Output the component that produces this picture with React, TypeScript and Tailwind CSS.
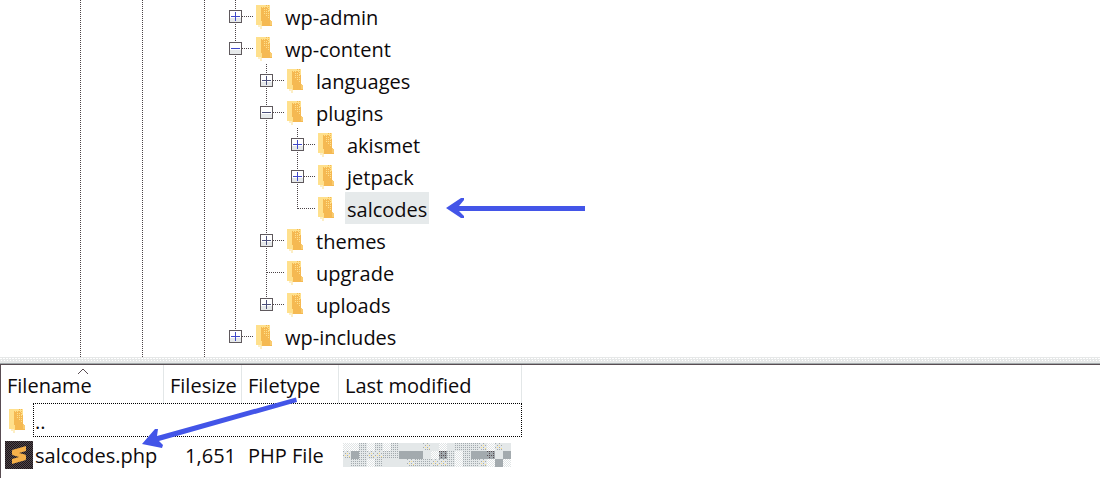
import { useState } from "react";

type Node = { name: string; open?: boolean; leaf?: boolean; children?: Node[] };

const tree: Node[] = [
  { name: "wp-admin" },
  {
    name: "wp-content",
    open: true,
    children: [
      { name: "languages" },
      {
        name: "plugins",
        open: true,
        children: [{ name: "akismet" }, { name: "jetpack" }, { name: "salcodes", leaf: true }],
      },
      { name: "themes" },
      { name: "upgrade", leaf: true },
      { name: "uploads" },
    ],
  },
  { name: "wp-includes" },
];

const rootGuides = [true, false, true, false, true];

function Guide({ show }: { show: boolean }) {
  return (
    <svg className="h-full w-[31px] shrink-0" aria-hidden="true" shapeRendering="crispEdges">
      {show && <path d="M15.5 0V32" stroke="#4b4347" strokeDasharray="1 1" />}
    </svg>
  );
}

function Joint({ last, box, open, blue }: { last: boolean; box: boolean; open: boolean; blue: boolean }) {
  const mark = blue ? "#3f48c8" : "#4b4f7a";
  return (
    <svg width="33" height="32" viewBox="0 0 33 32" aria-hidden="true" shapeRendering="crispEdges">
      <path d={last ? "M15.5 0V17" : "M15.5 0V32"} stroke="#4b4347" strokeDasharray="1 1" />
      <path d="M16 16.5H33" stroke="#4b4347" strokeDasharray="1 1" />
      {box && (
        <>
          <rect x="9.5" y="10.5" width="12" height="12" fill="#fff" stroke="#5f595d" />
          <path d="M10 18H21V22H10Z" fill="#e6e9ea" />
          <path d="M11 16.5H20" stroke={mark} />
          {!open && <path d="M15.5 12V21" stroke={mark} />}
        </>
      )}
    </svg>
  );
}

function Folder() {
  return (
    <svg width="16" height="24" viewBox="0 0 16 24" className="shrink-0" aria-hidden="true" shapeRendering="crispEdges">
      <defs>
        <pattern id="grain" width="2" height="2" patternUnits="userSpaceOnUse">
          <rect width="2" height="2" fill="#f5b952" />
          <path d="M0 0h1v1H0z" fill="#ffe08c" />
        </pattern>
        <pattern id="grain-light" width="2" height="2" patternUnits="userSpaceOnUse">
          <rect width="2" height="2" fill="#ffe08c" />
          <path d="M0 0h1v1H0z" fill="#f5b952" />
        </pattern>
      </defs>
      <path d="M0 0H14V14L16 17V21H6V24H4V22H2V20H0Z" fill="#ffe08c" />
      <path d="M5 2H8L10 7L8 14L6 17H16V21H6V17L5 13Z" fill="#f5b952" />
      <path d="M6 2H14V14H5L7 10V5Z" fill="url(#grain)" />
      <path d="M10 0H14V6H12V3H10Z" fill="url(#grain-light)" />
      <path d="M5 14L9 9V5H10V12L14 14V20H6V17L5 16Z" fill="#f5b952" />
      <path d="M14 15L16 17V20H14Z" fill="#f9cb70" />
      <path d="M0 20H2V22H4V24H6V21L4 20Z" fill="#fdeec4" />
    </svg>
  );
}

function Branch({ node, last, guides }: { node: Node; last: boolean; guides: boolean[] }) {
  const [open, setOpen] = useState(Boolean(node.open));
  const selected = node.name === "salcodes";
  const level = guides.length - rootGuides.length;
  const joint = <Joint last={last} box={!node.leaf} open={open} blue={level !== 1} />;
  return (
    <li>
      <div className="flex h-8 items-center">
        {guides.map((show, i) => (
          <Guide key={i} show={show} />
        ))}
        {node.leaf ? (
          <span className="shrink-0">{joint}</span>
        ) : (
          <button
            type="button"
            aria-expanded={open}
            aria-label={`Toggle ${node.name}`}
            className="shrink-0"
            onClick={() => setOpen(!open)}
          >
            {joint}
          </button>
        )}
        <span className="flex pl-[3px] pt-0.5">
          <Folder />
        </span>
        <span
          className={
            selected
              ? "ml-[11px] flex h-8 items-center bg-[#e6eaeb] pt-1 px-0.5"
              : "ml-[11px] flex h-8 items-center pt-1 px-0.5"
          }
        >
          {node.name}
        </span>
      </div>
      {open && node.children && (
        <ul>
          {node.children.map((child, i) => (
            <Branch
              key={child.name}
              node={child}
              last={i === node.children!.length - 1}
              guides={[...guides, !last]}
            />
          ))}
        </ul>
      )}
    </li>
  );
}

function ScriptIcon() {
  return (
    <svg width="28" height="28" viewBox="0 0 28 28" className="shrink-0" aria-hidden="true">
      <defs>
        <pattern id="weave" width="2" height="2" patternUnits="userSpaceOnUse">
          <rect width="2" height="2" fill="#51464b" />
          <path d="M0 0h1v1H0zM1 1h1v1H1z" fill="#1c1619" />
        </pattern>
      </defs>
      <rect width="28" height="28" rx="1" fill="url(#weave)" shapeRendering="crispEdges" />
      <path
        d="M21 5V10L14 12L20 13.5Q21 14 21 15V18Q21 19 20 19.300L7 23V18L14 16L8 14.300Q7 14 7 13V10Q7 9 8 8.700Z"
        fill="#f5b04a"
      />
    </svg>
  );
}

const mosaic = ["wwmwmwmlllylwlmmmywyll", "ygmyymmggglwdmwmggdlg", "lmmwmlllymmyymwmmywgw"];
const tones: Record<string, string> = {
  w: "url(#tone-w)",
  l: "#e4e8e9",
  m: "url(#tone-m)",
  y: "url(#tone-y)",
  g: "#a3aaae",
  d: "url(#tone-d)",
};

function MaskedDate() {
  return (
    <svg width="168" height="24" viewBox="0 0 168 24" role="img" aria-label="Hidden date" shapeRendering="crispEdges">
      <defs>
        <pattern id="tone-w" width="2" height="2" patternUnits="userSpaceOnUse">
          <rect width="2" height="2" fill="#fff" />
          <path d="M0 0h1v1H0zM1 1h1v1H1z" fill="#e0e4e5" />
        </pattern>
        <pattern id="tone-m" width="2" height="2" patternUnits="userSpaceOnUse">
          <rect width="2" height="2" fill="#e4e8e9" />
          <path d="M0 0h1v1H0z" fill="#a3aaae" />
        </pattern>
        <pattern id="tone-y" width="8" height="8" patternUnits="userSpaceOnUse">
          <rect width="8" height="8" fill="#e4e8e9" />
          <path d="M0 0h1v1H0zM2 2h1v1H2zM4 0h1v1H4zM6 2h1v1H6zM0 4h1v1H0zM4 4h1v1H4zM2 6h1v1H2zM6 6h1v1H6zM4 6h1v1H4z" fill="#a3aaae" />
          <path d="M2 4h1v1H2zM6 5h1v1H6zM4 2h1v1H4z" fill="#ffe083" />
        </pattern>
        <pattern id="tone-d" width="4" height="4" patternUnits="userSpaceOnUse">
          <rect width="4" height="4" fill="#a3aaae" />
          <path d="M0 0h1v1H0zM2 2h1v1H2zM2 0h1v1H2z" fill="#594f54" />
        </pattern>
      </defs>
      {mosaic.map((line, y) =>
        [...line].map((tone, x) => (
          <rect key={`${x}-${y}`} x={x * 8} y={y * 8} width="8" height="8" fill={tones[tone]} />
        )),
      )}
    </svg>
  );
}

function Arrows() {
  return (
    <svg
      className="pointer-events-none absolute left-0 top-0"
      width="600"
      height="478"
      viewBox="0 0 600 478"
      aria-hidden="true"
      fill="#4355e8"
    >
      <path d="M446 208L461 198H464V200L459 206H585V211H459L464 216V218H461Z" />
      <path d="M142 444L155 429H158L157 436L296 397.500L297 402L159 441L163 445L162 448Z" />
    </svg>
  );
}

export default function App() {
  return (
    <main className="relative min-h-screen overflow-hidden bg-white font-['Open_Sans','Noto_Sans',sans-serif] text-[20px] leading-7 text-[#0d090b]">
      <nav aria-label="Remote directories" className="pl-[65px]">
        <ul>
          {tree.map((node, i) => (
            <Branch key={node.name} node={node} last={i === tree.length - 1} guides={rootGuides} />
          ))}
        </ul>
        <div className="flex h-[5px] overflow-hidden">
          {rootGuides.map((show, i) => (
            <Guide key={i} show={show} />
          ))}
        </div>
      </nav>

      <div className="h-2 border-b border-[#594d53] bg-[#e6e8e8]">
        <svg width="100%" height="7" className="block" aria-hidden="true" shapeRendering="crispEdges">
          <defs>
            <pattern id="grip" width="3" height="7" patternUnits="userSpaceOnUse">
              <path d="M0 1h2v1H0zM1 3h1v1H1z" fill="#fff" />
            </pattern>
          </defs>
          <rect width="100%" height="7" fill="url(#grip)" />
          <rect y="6" width="100%" height="1" fill="#a3aaab" />
        </svg>
      </div>

      <section aria-label="Files" className="border-l border-[#594d53] pb-[5px]">
        <table className="w-[521px] table-fixed border-separate border-spacing-0 whitespace-nowrap text-left">
          <colgroup>
            <col className="w-[163px]" />
            <col className="w-[78px]" />
            <col className="w-[97px]" />
            <col className="w-[183px]" />
          </colgroup>
          <thead>
            <tr className="h-[38px]">
              <th className="relative border-r border-[#e3e7e8] p-0 pl-1.5 pt-1 font-normal" aria-sort="ascending">
                <svg className="absolute left-[76px] top-[3px]" width="12" height="7" viewBox="0 0 12 7" aria-hidden="true">
                  <path d="M1 6L6 1L11 6" fill="none" stroke="#594d53" />
                </svg>
                Filename
              </th>
              <th className="border-r border-[#e3e7e8] p-0 pl-1.5 pt-1 font-normal">Filesize</th>
              <th className="border-r border-[#e3e7e8] p-0 pl-1.5 pt-1 font-normal">Filetype</th>
              <th className="border-r border-[#e3e7e8] p-0 pl-1.5 pt-1 font-normal">Last modified</th>
            </tr>
          </thead>
          <tbody>
            <tr className="relative h-[34px]">
              <td className="p-0">
                <span className="flex items-center pl-2">
                  <span className="flex pt-0.5">
                    <Folder />
                  </span>
                  <span className="pl-2.5 pt-1">..</span>
                </span>
                <span className="absolute inset-y-0 left-8 right-0 border border-dotted border-black" />
              </td>
              <td className="p-0" />
              <td className="p-0" />
              <td className="p-0" />
            </tr>
            <tr className="h-[36px]">
              <td className="p-0">
                <span className="flex items-center gap-0.5 pl-1">
                  <ScriptIcon />
                  <span className="pt-0.5">salcodes.php</span>
                </span>
              </td>
              <td className="p-0 pr-1.5 pt-0.5 text-right">1,651</td>
              <td className="p-0 pl-1.5 pt-0.5">PHP File</td>
              <td className="p-0 pl-1">
                <span className="flex">
                  <MaskedDate />
                </span>
              </td>
            </tr>
          </tbody>
        </table>
      </section>
      <Arrows />
    </main>
  );
}
